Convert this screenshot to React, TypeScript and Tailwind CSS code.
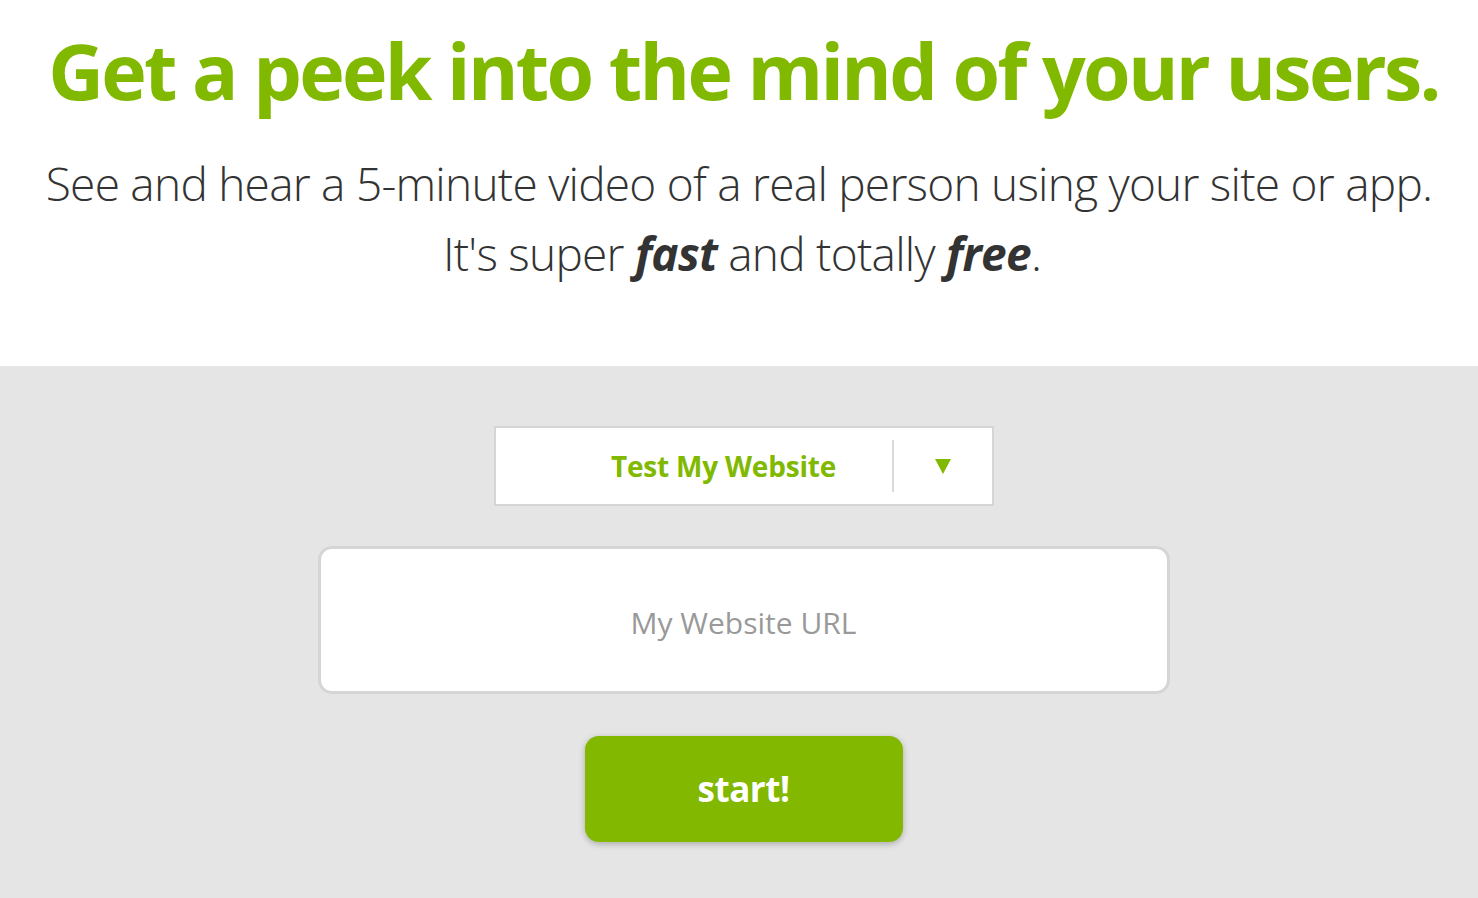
export default function App() {
  const font = { fontFamily: '"Open Sans", "Noto Sans", sans-serif' };
  return (
    <div className="w-[1478px] h-[898px] flex flex-col overflow-hidden" style={font}>
      <div className="h-[366px] bg-white flex flex-col items-center">
        <h1 className="mt-[26px] ml-[9px] text-[77px] leading-[90px] font-bold text-[#80b900] tracking-[-2.7px] whitespace-nowrap">
          Get a peek into the mind of your users.
        </h1>
        <p className="mt-[32px] text-[46px] leading-[70px] font-light text-[#333] tracking-[-0.75px] text-center whitespace-nowrap">
          See and hear a 5-minute video of a real person using your site or app.
          <br />
          <span className="pl-[6px]">It's super <b className="font-bold italic">fast</b> and totally <b className="font-bold italic">free</b>.</span>
        </p>
      </div>
      <div className="flex-1 bg-[#e5e5e5] flex flex-col items-center pl-[9px]">
        <div className="mt-[60px] w-[500px] h-[80px] bg-white border-2 border-[#d5d5d5] flex items-center">
          <div className="flex-1 text-center text-[#80b900] font-bold text-[28px] tracking-[-0.2px] pl-[60px]">Test My Website</div>
          <div className="w-[2px] h-[52px] bg-[#dadada]" />
          <div className="w-[98px] flex justify-center">
            <svg width="16" height="15" viewBox="0 0 16 15">
              <polygon points="0,0 16,0 8,15" fill="#80b900" />
            </svg>
          </div>
        </div>
        <div className="mt-[40px] w-[852px] h-[148px] bg-white border-[3px] border-[#d5d5d5] rounded-[14px] flex items-center justify-center">
          <span className="text-[#999] text-[30px] tracking-[0px] mt-[4px]">My Website URL</span>
        </div>
        <button className="mt-[42px] w-[318px] h-[106px] bg-[#82b900] rounded-[14px] shadow-[0_2px_6px_rgba(0,0,0,0.25)] text-white font-bold text-[35px] tracking-[-0.5px]">
          start!
        </button>
      </div>
    </div>
  );
}
